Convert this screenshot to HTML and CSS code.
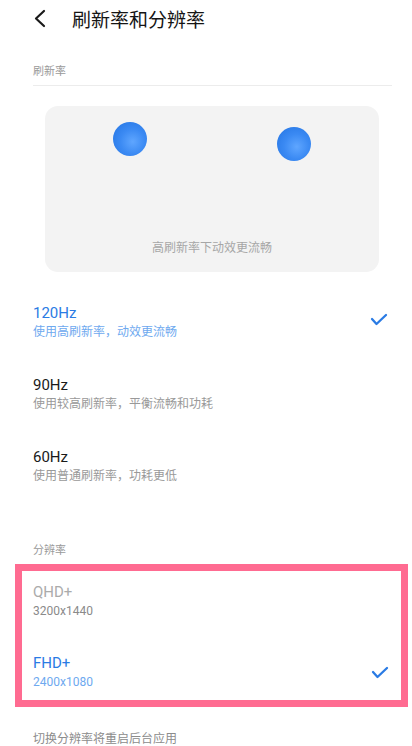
FILE: index.html
```html
<!DOCTYPE html>
<html lang="zh-CN">
<head>
<meta charset="utf-8">
<meta name="viewport" content="width=412">
<link rel="stylesheet" href="styles.css">
</head>
<body>
<div class="page">
  <header class="header">
    <svg class="back" width="14" height="20" viewBox="0 0 14 20"><polyline points="10,2 2,9.5 10,17" fill="none" stroke="#1a1a1a" stroke-width="2.2" stroke-linecap="round" stroke-linejoin="round"/></svg>
    <h1 class="title">刷新率和分辨率</h1>
  </header>

  <div class="section-label first">刷新率</div>
  <div class="divider"></div>

  <div class="preview">
    <span class="ball ball-a"></span>
    <span class="ball ball-b"></span>
    <div class="preview-text">高刷新率下动效更流畅</div>
  </div>

  <div class="rows">
    <div class="row active">
      <div class="row-text">
        <div class="row-title">120Hz</div>
        <div class="row-sub">使用高刷新率，动效更流畅</div>
      </div>
      <svg class="check" width="18" height="14" viewBox="0 0 18 14"><polyline points="2,6 6.5,11 16,2" fill="none" stroke="#2a7be4" stroke-width="2.3" stroke-linecap="round" stroke-linejoin="round"/></svg>
    </div>
    <div class="row">
      <div class="row-text">
        <div class="row-title">90Hz</div>
        <div class="row-sub">使用较高刷新率，平衡流畅和功耗</div>
      </div>
    </div>
    <div class="row">
      <div class="row-text">
        <div class="row-title">60Hz</div>
        <div class="row-sub">使用普通刷新率，功耗更低</div>
      </div>
    </div>
  </div>

  <div class="section-label second">分辨率</div>

  <div class="highlight">
    <div class="row disabled">
      <div class="row-text">
        <div class="row-title">QHD+</div>
        <div class="row-sub">3200x1440</div>
      </div>
    </div>
    <div class="row active">
      <div class="row-text">
        <div class="row-title">FHD+</div>
        <div class="row-sub">2400x1080</div>
      </div>
      <svg class="check" width="18" height="14" viewBox="0 0 18 14"><polyline points="2,6 6.5,11 16,2" fill="none" stroke="#2a7be4" stroke-width="2.3" stroke-linecap="round" stroke-linejoin="round"/></svg>
    </div>
  </div>

  <div class="footnote">切换分辨率将重启后台应用</div>
</div>
</body>
</html>
```
FILE: styles.css
```css
* { box-sizing: border-box; }
html, body { margin: 0; padding: 0; background: #fff; }
body {
  font-family: Roboto, "Noto Sans CJK SC", sans-serif;
  width: 412px;
  height: 746px;
  overflow: hidden;
}
.page { position: relative; }

.header {
  height: 38px;
  display: flex;
  align-items: center;
  padding-left: 34px;
}
.back { display: block; margin-top: 0; }
.title {
  margin: 0 0 0 24px;
  font-size: 19px;
  font-weight: 400;
  color: #151515;
  line-height: 24px;
  font-family: "Noto Sans CJK SC", sans-serif;
}

.section-label {
  font-family: "Noto Sans CJK SC", sans-serif;
  font-size: 11px;
  line-height: 16px;
  color: #9a9a9a;
  padding-left: 33px;
}
.section-label.first { margin-top: 24px; }
.section-label.second { margin-top: 22px; }

.divider {
  margin: 7px 20px 0 33px;
  height: 1px;
  background: #ececec;
}

.preview {
  position: relative;
  margin: 20px 0 0 45px;
  width: 334px;
  height: 166px;
  border-radius: 13px;
  background: #f3f3f3;
  display: flex;
  align-items: flex-end;
  justify-content: center;
  padding-bottom: 17px;
}
.ball {
  position: absolute;
  width: 34px;
  height: 34px;
  border-radius: 50%;
  background: radial-gradient(circle at 58% 58%, #5fa6ff 0%, #3b8af3 45%, #2273e2 100%);
}
.ball-a { left: 68px; top: 16px; }
.ball-b { left: 232px; top: 21px; }
.preview-text {
  font-family: "Noto Sans CJK SC", sans-serif;
  font-size: 12px;
  line-height: 16px;
  color: #a6a6a6;
}

.rows { margin-top: 31px; }
.row {
  height: 72px;
  display: flex;
  justify-content: space-between;
  align-items: flex-start;
  padding: 0 24px 0 33px;
}
.row-title {
  font-size: 15px;
  line-height: 20px;
  color: #1a1a1a;
}
.row-sub {
  font-size: 12px;
  line-height: 18px;
  color: #999;
  font-family: Roboto, "Noto Sans CJK SC", sans-serif;
}
.row.active .row-title { color: #2a7be4; }
.row.active .row-sub { color: #6ea9ef; }
.row.disabled .row-title { color: #ababab; }
.row.disabled .row-sub { color: #8a8a8a; }
.check { margin-top: 10px; }

.highlight {
  margin: 7px 4px 0 15px;
  height: 143px;
  border: 7px solid #ff6b91;
  padding-top: 11px;
}
.highlight .row { padding: 0 12px 0 11px; height: 71px; }
.highlight .row.active .check { margin-top: 13px; }

.footnote {
  margin-top: 22px;
  padding-left: 33px;
  font-family: "Noto Sans CJK SC", sans-serif;
  font-size: 12px;
  line-height: 18px;
  color: #8c8c8c;
}
```
